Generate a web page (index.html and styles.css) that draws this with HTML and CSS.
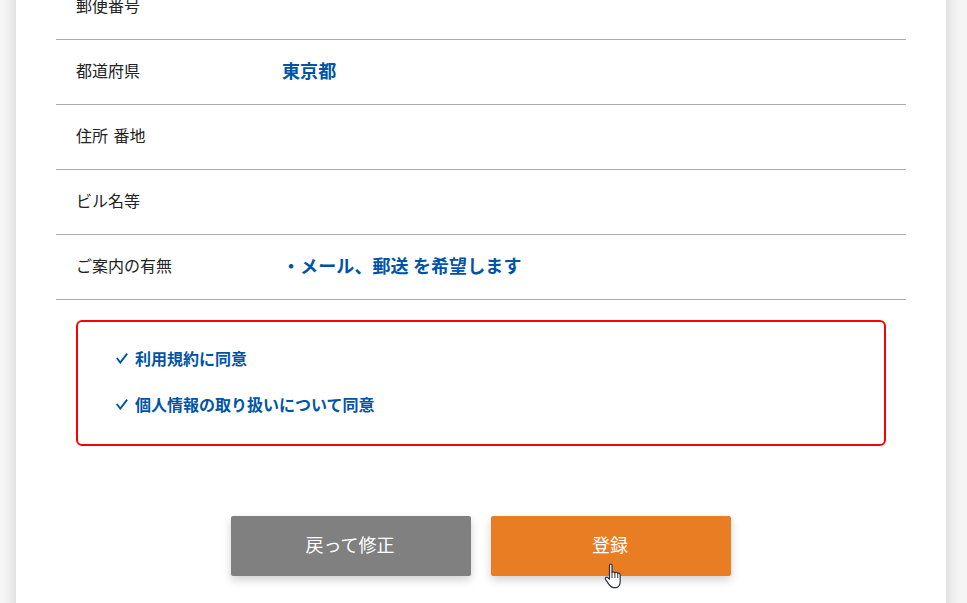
FILE: index.html
```html
<!DOCTYPE html>
<html lang="ja">
<head>
  <meta charset="UTF-8">
  <meta name="viewport" content="width=device-width, initial-scale=1.0">
  <title>登録内容の確認</title>
  <link rel="stylesheet" href="styles.css">
</head>
<body>
  <main class="card">
    <dl class="confirm-table">
      <div class="confirm-row">
        <dt>郵便番号</dt>
        <dd></dd>
      </div>
      <div class="confirm-row">
        <dt>都道府県</dt>
        <dd>東京都</dd>
      </div>
      <div class="confirm-row">
        <dt>住所 番地</dt>
        <dd></dd>
      </div>
      <div class="confirm-row">
        <dt>ビル名等</dt>
        <dd></dd>
      </div>
      <div class="confirm-row">
        <dt>ご案内の有無</dt>
        <dd>・メール、郵送 を希望します</dd>
      </div>
    </dl>

    <ul class="agree-box">
      <li class="agree-item">
        <svg class="check" viewBox="0 0 12 12" width="12" height="12"><path d="M0.8 6 L4.3 10.6 L11.2 1.6" fill="none" stroke="#0054a6" stroke-width="1.9"/></svg>
        利用規約に同意
      </li>
      <li class="agree-item">
        <svg class="check" viewBox="0 0 12 12" width="12" height="12"><path d="M0.8 6 L4.3 10.6 L11.2 1.6" fill="none" stroke="#0054a6" stroke-width="1.9"/></svg>
        個人情報の取り扱いについて同意
      </li>
    </ul>

    <div class="actions">
      <button class="btn btn-back" type="button">戻って修正</button>
      <button class="btn btn-submit" type="button">登録</button>
      <!-- mouse pointer from the capture -->
      <svg class="pointer" viewBox="0 0 20 26" width="20" height="26">
        <path d="M5.5 2.2 C5.5 0.6 8 0.6 8 2.2 V9.5 C8.4 8.5 10.6 8.5 10.9 9.8 C11.4 9 13.4 9 13.7 10.4 C14.3 9.8 16.2 10.2 16.2 11.8 V18 C16.2 21.5 14.6 24.6 11.5 24.6 H9.6 C7.2 24.6 6 23 4.8 21.2 L1.5 16.4 C0.6 15 2.4 13.4 3.8 14.6 L5.5 16.2 Z" fill="#fff" stroke="#2a3042" stroke-width="1.2" stroke-linejoin="round"/>
        <path d="M8 9.5 V15 M10.9 9.8 V15 M13.7 10.4 V15" fill="none" stroke="#2a3042" stroke-width="1"/>
      </svg>
    </div>
  </main>
</body>
</html>
```

FILE: styles.css
```css
html,
body {
  height: 100%;
}

body {
  margin: 0;
  overflow: hidden;
  background-color: #f5f5f5;
  font-family: "Noto Sans CJK JP", "Noto Sans", sans-serif;
  color: #222;
}

.card {
  width: 850px;
  height: 700px;
  margin: -25px 0 0 16px;
  padding: 0 40px;
  background-color: #fff;
  box-shadow: 0 0 14px rgba(0, 0, 0, 0.16);
}

.confirm-table {
  margin: 0;
}

.confirm-row {
  display: flex;
  align-items: center;
  box-sizing: border-box;
  height: 65px;
  padding: 0 0 5px 20px;
  border-bottom: 1px solid #aaa;
}

.confirm-row dt {
  width: 206px;
  font-size: 16px;
  word-spacing: 2px;
}

.confirm-row dd {
  margin: 0;
  font-size: 18px;
  font-weight: bold;
  letter-spacing: 0.1px;
  color: #0054a6;
}

.agree-box {
  box-sizing: border-box;
  height: 126px;
  margin: 20px 20px 0;
  padding: 13px 38px;
  list-style: none;
  border: 2px solid #f00;
  border-radius: 6px;
}

.agree-item {
  display: flex;
  align-items: center;
  gap: 7px;
  height: 46px;
  font-size: 16px;
  font-weight: bold;
  color: #0054a6;
}

.actions {
  position: relative;
  display: flex;
  justify-content: center;
  gap: 20px;
  margin-top: 70px;
}

.btn {
  width: 240px;
  height: 60px;
  padding: 0 2px 4px 0;
  border: none;
  border-radius: 2px;
  font-family: inherit;
  font-size: 18px;
  color: #fff;
  cursor: pointer;
  box-shadow: 0 4px 10px rgba(0, 0, 0, 0.18);
}

.btn-back {
  background-color: #808080;
}

.btn-submit {
  background-color: #e97d24;
}

.pointer {
  position: absolute;
  left: 548px;
  top: 47px;
}
```
